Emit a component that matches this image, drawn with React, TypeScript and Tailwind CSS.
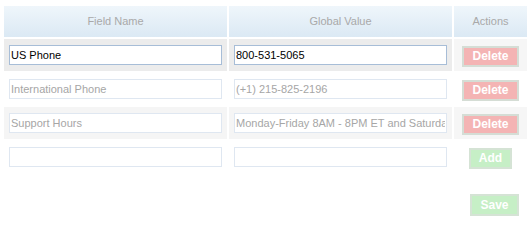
import React from "react";

type Row = {
  name: string;
  value: string;
  tone: "active" | "plain" | "soft";
};

const rows: Row[] = [
  { name: "US Phone", value: "800-531-5065", tone: "active" },
  { name: "International Phone", value: "(+1) 215-825-2196", tone: "plain" },
  {
    name: "Support Hours",
    value: "Monday-Friday 8AM - 8PM ET and Saturday 9AM - 5PM ET",
    tone: "soft",
  },
];

function FieldInput({ value, active }: { value: string; active?: boolean }) {
  return (
    <input
      readOnly
      value={value}
      className={
        active
          ? "block h-[20px] w-[213px] border border-[#a7bdd7] bg-white px-px text-[11px] text-black outline-none"
          : "block h-[20px] w-[213px] border border-[#dfe7f1] bg-white px-px text-[11px] text-[#a6a6a6] outline-none"
      }
    />
  );
}

function ActionButton({
  label,
  kind,
}: {
  label: string;
  kind: "delete" | "add" | "save";
}) {
  const base =
    "inline-flex h-[21px] items-center justify-center border-2 text-[12px] font-bold leading-none text-white";
  if (kind === "delete")
    return (
      <button type="button" className={`${base} w-[57px] border-[#d5ddd5] bg-[#f4b4b4]`}>
        {label}
      </button>
    );
  if (kind === "add")
    return (
      <button type="button" className={`${base} w-[43px] border-[#d5e3d5] bg-[#c6efc6]`}>
        {label}
      </button>
    );
  return (
    <button type="button" className={`${base} h-[22px] w-[49px] border-[#d5e3d5] bg-[#c6efc6]`}>
      {label}
    </button>
  );
}

export default function App() {
  return (
    <div className="h-[226px] w-[531px] bg-white pt-[4px] pl-[2px] font-['Liberation_Sans',Arial,sans-serif]">
      <table className="w-[527px] table-fixed border-separate border-spacing-[2px]">
        <colgroup>
          <col className="w-[223px]" />
          <col className="w-[223px]" />
          <col className="w-[73px]" />
        </colgroup>
        <thead>
          <tr className="h-[31px]">
            {["Field Name", "Global Value", "Actions"].map((h) => (
              <th
                key={h}
                className="bg-gradient-to-b from-[#eff6fb] to-[#dbe9f4] p-0 text-center text-[11px] font-normal text-[#a9a9a9]"
              >
                {h}
              </th>
            ))}
          </tr>
        </thead>
        <tbody>
          {rows.map((r) => {
            const cellBg =
              r.tone === "active"
                ? "bg-[#ececec]"
                : r.tone === "soft"
                ? "bg-[#f5f5f5]"
                : "bg-white";
            const actionBg = r.tone === "plain" ? "bg-white" : "bg-[#f6f6f6]";
            return (
              <tr key={r.name} className="h-[32px]">
                <td className={`${cellBg} px-[5px] py-0`}>
                  <FieldInput value={r.name} active={r.tone === "active"} />
                </td>
                <td className={`${cellBg} px-[5px] py-0`}>
                  <FieldInput value={r.value} active={r.tone === "active"} />
                </td>
                <td className={`${actionBg} p-0 text-center`}>
                  <ActionButton label="Delete" kind="delete" />
                </td>
              </tr>
            );
          })}
          <tr className="h-[32px]">
            <td className="px-[5px] py-0">
              <FieldInput value="" />
            </td>
            <td className="px-[5px] py-0">
              <FieldInput value="" />
            </td>
            <td className="p-0 text-center">
              <ActionButton label="Add" kind="add" />
            </td>
          </tr>
        </tbody>
      </table>
      <div className="mt-[19px] flex justify-end pr-[12px]">
        <ActionButton label="Save" kind="save" />
      </div>
    </div>
  );
}
